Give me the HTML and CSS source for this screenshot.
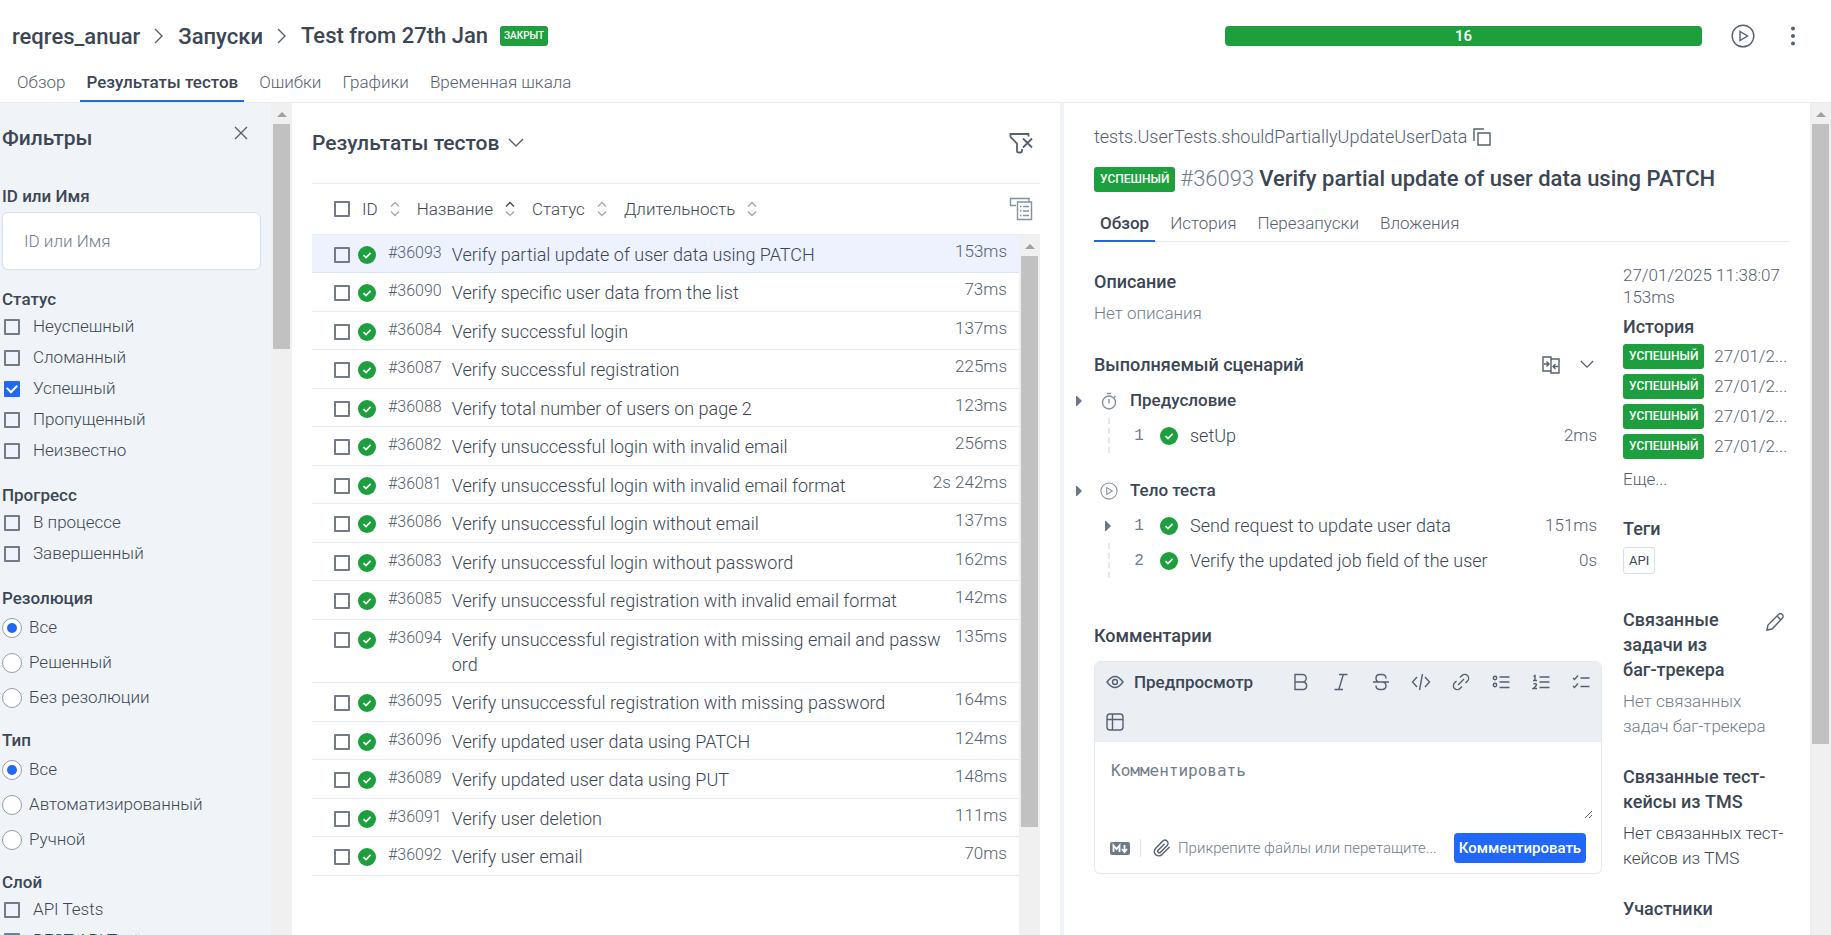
FILE: index.html
```html
<!DOCTYPE html>
<html lang="ru">
<head>
<meta charset="utf-8">
<title>Test from 27th Jan</title>
<meta name="viewport" content="width=device-width, initial-scale=1">
<link rel="stylesheet" href="styles.css">
</head>
<body>
<svg class="sprite" aria-hidden="true">
  <symbol id="ok" viewBox="0 0 18 18"><circle cx="9" cy="9" r="9" fill="#1d9f3e"/><path d="M5.500 9.200 8 11.600l4.600-4.700" fill="none" stroke="#fff" stroke-width="1.700"/></symbol>
  <symbol id="chev-right" viewBox="0 0 10 16"><path d="M1 1l7 7-7 7"/></symbol>
  <symbol id="chev-down" viewBox="0 0 16 10"><path d="M1 1l7 7 7-7"/></symbol>
  <symbol id="sort" viewBox="0 0 10 16"><path class="up" d="M1 5.500l4-4 4 4"/><path class="down" d="M1 10.500l4 4 4-4"/></symbol>
  <symbol id="play" viewBox="0 0 24 24"><circle cx="12" cy="12" r="10.800"/><path d="M9 7.500v9l7.500-4.500z"/></symbol>
  <symbol id="caret" viewBox="0 0 16 16"><path d="M4 3v10h1l5-5-5-5z" fill="#6c7787" stroke="none"/></symbol>
</svg>

<header class="top">
  <div class="top-row">
    <nav class="crumbs" aria-label="Путь">
      <a href="#">reqres_anuar</a>
      <svg class="ic" width="10" height="16"><use href="#chev-right"/></svg>
      <a href="#">Запуски</a>
      <svg class="ic" width="10" height="16"><use href="#chev-right"/></svg>
      <h1>Test from 27th Jan</h1>
      <span class="badge badge-small">ЗАКРЫТ</span>
    </nav>
    <div class="top-actions">
      <div class="progress">16</div>
      <button class="icon-btn" aria-label="Запустить"><svg class="ic" width="24" height="24"><use href="#play"/></svg></button>
      <button class="icon-btn" aria-label="Меню"><svg width="24" height="24" viewBox="0 0 24 24" fill="#566070"><circle cx="12" cy="4.500" r="2"/><circle cx="12" cy="12" r="2"/><circle cx="12" cy="19.500" r="2"/></svg></button>
    </div>
  </div>
  <nav class="tabs top-tabs" aria-label="Разделы">
    <a href="#">Обзор</a>
    <a href="#" class="active" aria-current="page">Результаты тестов</a>
    <a href="#">Ошибки</a>
    <a href="#">Графики</a>
    <a href="#">Временная шкала</a>
  </nav>
</header>

<div class="columns">
  <aside class="filters">
    <form class="filters-body">
      <div class="filters-head">
        <h2>Фильтры</h2>
        <button type="button" class="icon-btn" aria-label="Закрыть"><svg class="ic" width="14" height="14" viewBox="0 0 14 14"><path d="M1 1l12 12M13 1L1 13"/></svg></button>
      </div>
      <div class="field">
        <label for="q">ID или Имя</label>
        <input id="q" type="text" placeholder="ID или Имя">
      </div>
      <fieldset>
        <legend>Статус</legend>
        <label class="opt"><input type="checkbox">Неуспешный</label>
        <label class="opt"><input type="checkbox">Сломанный</label>
        <label class="opt"><input type="checkbox" checked>Успешный</label>
        <label class="opt"><input type="checkbox">Пропущенный</label>
        <label class="opt"><input type="checkbox">Неизвестно</label>
      </fieldset>
      <fieldset>
        <legend>Прогресс</legend>
        <label class="opt"><input type="checkbox">В процессе</label>
        <label class="opt"><input type="checkbox">Завершенный</label>
      </fieldset>
      <fieldset class="radios">
        <legend>Резолюция</legend>
        <label class="opt"><input type="radio" name="res" checked>Все</label>
        <label class="opt"><input type="radio" name="res">Решенный</label>
        <label class="opt"><input type="radio" name="res">Без резолюции</label>
      </fieldset>
      <fieldset class="radios">
        <legend>Тип</legend>
        <label class="opt"><input type="radio" name="type" checked>Все</label>
        <label class="opt"><input type="radio" name="type">Автоматизированный</label>
        <label class="opt"><input type="radio" name="type">Ручной</label>
      </fieldset>
      <fieldset>
        <legend>Слой</legend>
        <label class="opt"><input type="checkbox">API Tests</label>
        <label class="opt"><input type="checkbox">REST API Tests</label>
      </fieldset>
    </form>
    <div class="scroll" aria-hidden="true"><span class="thumb" style="height:27%"></span></div>
  </aside>

  <main class="results">
    <div class="results-head">
      <h2>Результаты тестов</h2>
      <button class="icon-btn" aria-label="Выбрать вид"><svg class="ic" width="16" height="10"><use href="#chev-down"/></svg></button>
      <button class="icon-btn push" aria-label="Сбросить фильтр"><svg class="ic thick" width="24" height="22" viewBox="0 0 24 22"><path d="M19.500 4.500V2H1.500v3l6.500 6.500V19q0 1.500 1.500 1.500h2q1.500 0 1.500-2V17M14 6.500l9 9M23 6.500l-9 9"/></svg></button>
    </div>
    <div class="sorters">
      <input type="checkbox" aria-label="Выбрать все">
      <button>ID<svg class="ic sort" width="10" height="16"><use href="#sort"/></svg></button>
      <button>Название<svg class="ic sort asc" width="10" height="16"><use href="#sort"/></svg></button>
      <button>Статус<svg class="ic sort" width="10" height="16"><use href="#sort"/></svg></button>
      <button>Длительность<svg class="ic sort" width="10" height="16"><use href="#sort"/></svg></button>
      <button class="icon-btn push" aria-label="Колонки"><svg class="ic pale" width="24" height="24" viewBox="0 0 24 24"><path d="M7 8.500H1.500v-7H20V4.500M8.500 5H22.500V22.500H8.500zM11 9.500h1.500M14 9.500h6M11 14h1.500M14 14h6M11 18.500h1.500M14 18.500h6"/></svg></button>
    </div>
    <div class="list-wrap">
      <ul class="list">
        <li class="row selected"><span class="pick"><input type="checkbox" aria-label="#36093"><svg width="18" height="18"><use href="#ok"/></svg></span><span class="num">#36093</span><a href="#" class="name">Verify partial update of user data using PATCH</a><span class="dur">153ms</span></li>
        <li class="row"><span class="pick"><input type="checkbox" aria-label="#36090"><svg width="18" height="18"><use href="#ok"/></svg></span><span class="num">#36090</span><a href="#" class="name">Verify specific user data from the list</a><span class="dur">73ms</span></li>
        <li class="row"><span class="pick"><input type="checkbox" aria-label="#36084"><svg width="18" height="18"><use href="#ok"/></svg></span><span class="num">#36084</span><a href="#" class="name">Verify successful login</a><span class="dur">137ms</span></li>
        <li class="row"><span class="pick"><input type="checkbox" aria-label="#36087"><svg width="18" height="18"><use href="#ok"/></svg></span><span class="num">#36087</span><a href="#" class="name">Verify successful registration</a><span class="dur">225ms</span></li>
        <li class="row"><span class="pick"><input type="checkbox" aria-label="#36088"><svg width="18" height="18"><use href="#ok"/></svg></span><span class="num">#36088</span><a href="#" class="name">Verify total number of users on page 2</a><span class="dur">123ms</span></li>
        <li class="row"><span class="pick"><input type="checkbox" aria-label="#36082"><svg width="18" height="18"><use href="#ok"/></svg></span><span class="num">#36082</span><a href="#" class="name">Verify unsuccessful login with invalid email</a><span class="dur">256ms</span></li>
        <li class="row"><span class="pick"><input type="checkbox" aria-label="#36081"><svg width="18" height="18"><use href="#ok"/></svg></span><span class="num">#36081</span><a href="#" class="name">Verify unsuccessful login with invalid email format</a><span class="dur">2s 242ms</span></li>
        <li class="row"><span class="pick"><input type="checkbox" aria-label="#36086"><svg width="18" height="18"><use href="#ok"/></svg></span><span class="num">#36086</span><a href="#" class="name">Verify unsuccessful login without email</a><span class="dur">137ms</span></li>
        <li class="row"><span class="pick"><input type="checkbox" aria-label="#36083"><svg width="18" height="18"><use href="#ok"/></svg></span><span class="num">#36083</span><a href="#" class="name">Verify unsuccessful login without password</a><span class="dur">162ms</span></li>
        <li class="row"><span class="pick"><input type="checkbox" aria-label="#36085"><svg width="18" height="18"><use href="#ok"/></svg></span><span class="num">#36085</span><a href="#" class="name">Verify unsuccessful registration with invalid email format</a><span class="dur">142ms</span></li>
        <li class="row"><span class="pick"><input type="checkbox" aria-label="#36094"><svg width="18" height="18"><use href="#ok"/></svg></span><span class="num">#36094</span><a href="#" class="name">Verify unsuccessful registration with missing email and password</a><span class="dur">135ms</span></li>
        <li class="row"><span class="pick"><input type="checkbox" aria-label="#36095"><svg width="18" height="18"><use href="#ok"/></svg></span><span class="num">#36095</span><a href="#" class="name">Verify unsuccessful registration with missing password</a><span class="dur">164ms</span></li>
        <li class="row"><span class="pick"><input type="checkbox" aria-label="#36096"><svg width="18" height="18"><use href="#ok"/></svg></span><span class="num">#36096</span><a href="#" class="name">Verify updated user data using PATCH</a><span class="dur">124ms</span></li>
        <li class="row"><span class="pick"><input type="checkbox" aria-label="#36089"><svg width="18" height="18"><use href="#ok"/></svg></span><span class="num">#36089</span><a href="#" class="name">Verify updated user data using PUT</a><span class="dur">148ms</span></li>
        <li class="row"><span class="pick"><input type="checkbox" aria-label="#36091"><svg width="18" height="18"><use href="#ok"/></svg></span><span class="num">#36091</span><a href="#" class="name">Verify user deletion</a><span class="dur">111ms</span></li>
        <li class="row"><span class="pick"><input type="checkbox" aria-label="#36092"><svg width="18" height="18"><use href="#ok"/></svg></span><span class="num">#36092</span><a href="#" class="name">Verify user email</a><span class="dur">70ms</span></li>
      </ul>
      <div class="scroll" aria-hidden="true"><span class="thumb" style="height:81.5%"></span></div>
    </div>
  </main>

  <section class="detail">
    <div class="detail-body">
      <div class="path"><span>tests.UserTests.shouldPartiallyUpdateUserData</span>
        <button class="icon-btn" aria-label="Копировать"><svg class="ic" width="18" height="18" viewBox="0 0 18 18"><path d="M1 13V1h10M5 5h12v12H5z"/></svg></button>
      </div>
      <h2 class="detail-title"><span class="badge">УСПЕШНЫЙ</span><span class="case-id">#36093</span><span>Verify partial update of user data using PATCH</span></h2>
      <nav class="tabs" aria-label="Тест">
        <a href="#" class="active" aria-current="page">Обзор</a>
        <a href="#">История</a>
        <a href="#">Перезапуски</a>
        <a href="#">Вложения</a>
      </nav>
      <div class="detail-grid">
        <div class="detail-main">
          <h3>Описание</h3>
          <p class="muted">Нет описания</p>
          <div class="scenario-head">
            <h3>Выполняемый сценарий</h3>
            <button class="icon-btn" aria-label="Сравнить"><svg class="ic" width="18" height="18" viewBox="0 0 18 18"><path d="M9 3V1H1v14h8V3h8v14H9v-2M2 8h4.500M4.500 5.500L7 8l-2.500 2.500M16 10.500h-4.500M13.500 8L11 10.500l2.500 2.500"/></svg></button>
            <button class="icon-btn" aria-label="Свернуть"><svg class="ic" width="14" height="9"><use href="#chev-down"/></svg></button>
          </div>
          <div class="group">
            <div class="group-head">
              <svg width="16" height="16"><use href="#caret"/></svg>
              <svg class="ic pale" width="18" height="18" viewBox="0 0 18 18"><circle cx="9" cy="10.500" r="6.500"/><path d="M7 1.500h4M9 7v4.500M14 5.500l1.500-1.500"/></svg>
              <h4>Предусловие</h4>
            </div>
            <div class="step"><span class="rail"></span><span class="idx">1</span><svg width="18" height="18"><use href="#ok"/></svg><span class="step-name">setUp</span><span class="step-dur">2ms</span></div>
          </div>
          <div class="group">
            <div class="group-head">
              <svg width="16" height="16"><use href="#caret"/></svg>
              <svg class="ic pale" width="18" height="18"><use href="#play"/></svg>
              <h4>Тело теста</h4>
            </div>
            <div class="step"><svg width="16" height="16"><use href="#caret"/></svg><span class="idx">1</span><svg width="18" height="18"><use href="#ok"/></svg><span class="step-name">Send request to update user data</span><span class="step-dur">151ms</span></div>
            <div class="step"><span class="rail"></span><span class="idx">2</span><svg width="18" height="18"><use href="#ok"/></svg><span class="step-name">Verify the updated job field of the user</span><span class="step-dur">0s</span></div>
          </div>
          <h3 class="comments-title">Комментарии</h3>
          <form class="editor">
            <div class="toolbar">
              <button type="button" class="preview"><svg class="ic" width="18" height="18" viewBox="0 0 18 18"><path d="M1 9q8-11 16 0-8 11-16 0z"/><circle cx="9" cy="9" r="2.500"/></svg>Предпросмотр</button>
              <button type="button" aria-label="Жирный"><svg class="ic" width="18" height="18" viewBox="0 0 18 18"><path d="M3 1.500h7.500a3.700 3.700 0 0 1 0 7.500H3zM3 9h8.500a3.800 3.800 0 0 1 0 7.500H3z"/></svg></button>
              <button type="button" aria-label="Курсив"><svg class="ic" width="18" height="18" viewBox="0 0 18 18"><path d="M7 1.500h8.500M2.500 16.500H11M11.300 1.500l-4.500 15"/></svg></button>
              <button type="button" aria-label="Зачеркнутый"><svg class="ic" width="18" height="18" viewBox="0 0 18 18"><path d="M14 5.500C14 3 12.500 1.500 10 1.500H8C5.500 1.500 4 3 4 5.200S5.500 9 8 9h2c2.500 0 4 1.500 4 3.800s-1.500 3.700-4 3.700H8c-2.500 0-4-1.500-4-4M1 9h16"/></svg></button>
              <button type="button" aria-label="Код"><svg class="ic" width="20" height="18" viewBox="0 0 20 18"><path d="M6 4L1.500 9 6 14M14 4l4.500 5-4.500 5M11.500 1l-3 16"/></svg></button>
              <button type="button" aria-label="Ссылка"><svg class="ic" width="18" height="18" viewBox="0 0 18 18"><path d="M6 12l6-6M8 4.500l2-2a3.800 3.800 0 0 1 5.500 5.500l-2 2M10 13.500l-2 2A3.800 3.800 0 0 1 2.500 10l2-2"/></svg></button>
              <button type="button" aria-label="Список"><svg class="ic" width="18" height="18" viewBox="0 0 18 18"><circle cx="3" cy="5" r="1.700"/><circle cx="3" cy="12" r="1.700"/><path d="M7.500 4h10M7.500 9h10M7.500 14.500h10"/></svg></button>
              <button type="button" aria-label="Нумерованный список"><svg class="ic" width="18" height="18" viewBox="0 0 18 18"><path d="M1.500 3.500L3 2.500v5M1 7.500h4M1.500 11q2.500-1 3 .5 0 1.500-3.300 4H5M7.500 4h10M7.500 9h10M7.500 14.500h10"/></svg></button>
              <button type="button" aria-label="Список задач"><svg class="ic" width="18" height="18" viewBox="0 0 18 18"><path d="M1 5l1.500 1.500L6 2.500M1 13l1.500 1.500L6 10.500M8.500 5h9M8.500 13.500h9"/></svg></button>
              <button type="button" aria-label="Таблица"><svg class="ic" width="18" height="18" viewBox="0 0 18 18"><rect x="1" y="1" width="16" height="16" rx="3"/><path d="M1 6.500h16M6.500 1v16"/></svg></button>
            </div>
            <textarea placeholder="Комментировать" aria-label="Комментировать"></textarea>
            <div class="editor-foot">
              <svg class="md" width="20" height="13" viewBox="0 0 20 13"><rect width="20" height="13" rx="2" fill="#6f7a89"/><path d="M3.500 10V3.500l3 3.500 3-3.500V10M14.500 3v6.500M12 7l2.500 3L17 7" fill="none" stroke="#fff" stroke-width="1.800"/></svg>
              <label class="attach"><svg class="ic" width="18" height="18" viewBox="0 0 18 18"><path d="M16.500 8l-7.500 7.500a4.300 4.300 0 0 1-6.500-6L9.500 2.300a3 3 0 0 1 4.700 4.200l-6.700 6.700a1.500 1.500 0 0 1-2.400-2L11.500 5"/></svg><span>Прикрепите файлы или перетащите...</span><input type="file" class="hidden-file"></label>
              <button type="button" class="primary">Комментировать</button>
            </div>
          </form>
        </div>
        <aside class="meta">
          <p class="time">27/01/2025 11:38:07<br>153ms</p>
          <h3>История</h3>
          <ul class="history">
            <li><span class="badge">УСПЕШНЫЙ</span><a href="#">27/01/2...</a></li>
            <li><span class="badge">УСПЕШНЫЙ</span><a href="#">27/01/2...</a></li>
            <li><span class="badge">УСПЕШНЫЙ</span><a href="#">27/01/2...</a></li>
            <li><span class="badge">УСПЕШНЫЙ</span><a href="#">27/01/2...</a></li>
          </ul>
          <a href="#" class="more">Еще...</a>
          <h3>Теги</h3>
          <span class="tag">API</span>
          <div class="meta-head">
            <h3>Связанные задачи из баг-трекера</h3>
            <button class="icon-btn" aria-label="Изменить"><svg class="ic" width="18" height="18" viewBox="0 0 18 18"><path d="M1 17l1-5L12.500 1.500a2.400 2.400 0 0 1 3.800 3.800L6 16zM11 3l4 4"/></svg></button>
          </div>
          <p class="muted">Нет связанных задач баг-трекера</p>
          <h3 class="tms">Связанные тест-кейсы из TMS</h3>
          <p>Нет связанных тест-кейсов из TMS</p>
          <h3 class="people">Участники</h3>
        </aside>
      </div>
    </div>
    <div class="scroll" aria-hidden="true"><span class="thumb" style="height:74.5%"></span></div>
  </section>
</div>
</body>
</html>
```
FILE: styles.css
```css
* { box-sizing: border-box; }

body {
  margin: 0;
  height: 100vh;
  display: flex;
  flex-direction: column;
  overflow: hidden;
  background: #fff;
  color: #3c4654;
  font: 300 17px/25px Roboto, "Noto Sans", sans-serif;
}

h1, h2, h3, h4, p, ul { margin: 0; padding: 0; font-weight: 500; }
p { font-weight: 300; }
h1, .detail-title { font-size: 22px; line-height: 28px; }
h2 { font-size: 21px; line-height: 28px; }
h3 { font-size: 18px; line-height: 25px; }
h4 { font-size: 17px; }
ul { list-style: none; font-weight: 300; }
a { color: inherit; text-decoration: none; }

button {
  padding: 0;
  border: 0;
  background: none;
  color: inherit;
  font: inherit;
  cursor: pointer;
}

.sprite { position: absolute; width: 0; height: 0; }
.ic { display: block; fill: none; stroke: #566070; stroke-width: 1.4; flex: none; }
.ic.thick { stroke-width: 1.8; }
.ic.pale { stroke: #8590a0; }
.icon-btn { display: flex; align-items: center; justify-content: center; }
.push { margin-left: auto; }
.muted { color: #717c8b; }

input[type="checkbox"], input[type="radio"] {
  appearance: none;
  flex: none;
  margin: 0;
  display: grid;
  place-items: center;
}
input[type="checkbox"] { width: 16px; height: 16px; border: 2px solid #737b88; border-radius: 1px; }
input[type="checkbox"]:checked { background: #1f68fa; border-color: #1f68fa; }
input[type="checkbox"]:checked::before {
  content: "";
  width: 8px;
  height: 5px;
  margin-bottom: 3px;
  border: solid #fff;
  border-width: 0 0 2px 2px;
  transform: rotate(-45deg);
}
input[type="radio"] { width: 20px; height: 20px; border: 1px solid #949dab; border-radius: 50%; background: #fff; }
input[type="radio"]:checked::before { content: ""; width: 10px; height: 10px; border-radius: 50%; background: #1f68fa; }

.badge {
  flex: none;
  padding: 0 6px;
  border-radius: 3px;
  background: #1d9f3e;
  color: #fff;
  font-size: 12px;
  font-weight: 500;
  line-height: 25px;
}
.badge-small { padding: 0 4px; font-size: 10px; line-height: 20px; }

/* Header */
.top { flex: none; border-bottom: 1px solid #e6ecf2; }
.top-row { display: flex; align-items: center; height: 72px; padding: 0 26px 0 12px; }
.crumbs { display: flex; align-items: center; gap: 14px; font-size: 22px; font-weight: 500; }
.crumbs .badge { margin-left: -2px; }
.top-actions { display: flex; align-items: center; gap: 26px; margin-left: auto; }
.progress {
  width: 477px;
  margin-right: 3px;
  border-radius: 4px;
  background: #1d9f3e;
  color: #fff;
  font-size: 15px;
  font-weight: 500;
  line-height: 20px;
  text-align: center;
}
.tabs { display: flex; gap: 9px; }
.tabs a { padding: 0 6px 4px; border-bottom: 2px solid transparent; color: #566070; }
.tabs .active { border-color: #1f68e0; color: #3c4654; font-weight: 500; }
.top-tabs { height: 30px; padding-left: 11px; }
.top-tabs a { height: 30px; line-height: 20px; }

/* Column frame */
.columns { flex: 1; display: grid; grid-template: minmax(0, 1fr) / 292px 768fr 771fr; min-height: 0; }
.scroll { flex: none; display: flex; flex-direction: column; align-items: center; width: 21px; background: #f0f0f0; }
.scroll::before {
  content: "";
  flex: none;
  margin: 9px 0 7px;
  border: solid transparent;
  border-width: 0 5px 5px;
  border-bottom-color: #a0a0a0;
}
.thumb { flex: none; width: 17px; background: #c1c1c1; }

/* Filters */
.filters { display: flex; background: #f0f4f8; }
.filters-body { flex: 1; min-width: 0; padding: 17px 10px 0 2px; overflow: hidden; }
.filters-head { display: flex; justify-content: space-between; padding: 4px 13px 0 0; margin-bottom: 33px; }
.filters-head .icon-btn { height: 18px; }
.field { display: flex; flex-direction: column; gap: 4px; margin-bottom: 18px; }
.field label, legend { padding: 0; font-weight: 500; line-height: 23px; }
.field input {
  width: 100%;
  height: 58px;
  padding: 0 21px;
  border: 1px solid #d9dfe7;
  border-radius: 6px;
  background: #fff;
  font: inherit;
}
::placeholder { color: #717c8b; opacity: 1; }
fieldset { margin: 0 0 18px; padding: 0; border: 0; }
.opt { display: flex; align-items: center; gap: 13px; height: 31px; padding-left: 2px; }
.radios { margin-bottom: 14px; }
.radios .opt { height: 35px; gap: 7px; padding-left: 0; }

/* Results */
.results { min-width: 0; display: flex; flex-direction: column; padding: 0 20px; }
.results-head { display: flex; align-items: center; gap: 9px; height: 81px; padding-right: 7px; border-bottom: 1px solid #e6ecf0; }
.sorters { display: flex; align-items: center; height: 51px; padding: 0 7px 0 22px; border-bottom: 1px solid #e6ecf0; }
.sorters button { display: flex; align-items: center; gap: 12px; margin-left: 17px; }
.sorters input + button { margin-left: 12px; }
.sorters .push { margin-left: auto; }
.sort { stroke: #a3aab4; }
.asc { --up: #3c4654; }
.up { stroke: var(--up, #a3aab4); }
.list-wrap { flex: 1; display: flex; min-height: 0; }
.list { flex: 1; min-width: 0; }
.row { display: flex; align-items: flex-start; padding: 7px 12px 5px 22px; border-bottom: 1px solid #e6ecf0; }
.row:nth-child(even) { padding-bottom: 6px; }
.row.selected { background: #edf2fe; border-color: #dbe4f3; }
.pick { display: flex; align-items: center; gap: 8px; height: 25px; }
.num { margin: 0 10px 0 12px; color: #566070; font-size: 16px; line-height: 22px; }
.name { flex: 1; min-width: 0; font-size: 18px; word-break: break-all; }
.dur { margin-left: 12px; color: #566070; line-height: 18px; }

/* Test detail */
.detail { min-width: 0; display: flex; border-left: 4px solid #f0f4f8; }
.detail-body { flex: 1; min-width: 0; padding: 21px 20px 0 30px; overflow: hidden; }
.path { display: flex; align-items: center; gap: 6px; color: #566070; font-size: 18px; }
.detail-title { display: flex; align-items: center; gap: 5px; margin: 16px 0 18px; }
.case-id { color: #717c8b; font-weight: 300; }
.detail-body .tabs { border-bottom: 1px solid #e6ecf2; }
.detail-body .tabs a { margin-bottom: -1px; }
.detail-grid { display: grid; grid-template-columns: minmax(0, 1fr) 167px; gap: 21px; }
.detail-main { padding-top: 27px; }
.detail-main > h3 { margin-bottom: 7px; }
.scenario-head { display: flex; align-items: center; gap: 20px; margin: 26px 0 6px; padding-right: 8px; }
.scenario-head h3 { flex: 1; }
.group { margin: 0 0 20px -22px; }
.group-head { display: flex; align-items: center; gap: 12px; height: 35px; }
.step { display: flex; align-items: center; gap: 12px; height: 35px; padding: 0 5px 0 28px; }
.step > :first-child { flex: none; width: 18px; }
.rail { display: flex; justify-content: center; height: 35px; }
.rail::before { content: ""; border-left: 2px dashed #e2e8ef; }
.idx { width: 18px; color: #717c8b; font: 16px "Liberation Mono", monospace; text-align: center; }
.step-name { flex: 1; font-size: 18px; }
.step-dur { color: #566070; }
.comments-title { margin-top: 45px; }
.detail-main > .comments-title { margin-bottom: 13px; }
.editor { border: 1px solid #e3e9ef; border-radius: 6px; overflow: hidden; }
.toolbar { display: flex; flex-wrap: wrap; background: #ebeff4; }
.toolbar button { display: flex; align-items: center; justify-content: center; width: 40px; height: 40px; }
.toolbar .preview { width: auto; flex: 1; justify-content: flex-start; gap: 10px; padding-left: 11px; font-weight: 500; }
.toolbar button:last-child { margin-right: auto; }
textarea {
  display: block;
  width: calc(100% - 8px);
  height: 77px;
  padding: 16px;
  border: 0;
  background: none;
  font: 16px/25px "DejaVu Sans Mono", monospace;
  resize: vertical;
}
.editor-foot { display: flex; align-items: center; gap: 10px; padding: 14px 15px 10px; }
.md { flex: none; }
.attach { flex: 1; min-width: 0; display: flex; align-items: center; gap: 7px; padding-left: 12px; border-left: 1px solid #dfe5ec; color: #717c8b; font-size: 15px; line-height: 16px; }
.attach span { line-height: 20px; margin: -2px 0; white-space: nowrap; }
.hidden-file { display: none; }
.primary { flex: none; width: 132px; height: 30px; border-radius: 4px; background: #1f68fa; color: #fff; font-size: 15px; font-weight: 500; }

.meta { padding-top: 22px; }
.time { margin-bottom: 6px; color: #566070; line-height: 22px; }
.history { display: grid; grid-template-columns: minmax(0, 1fr); gap: 5px; margin: 5px 0 8px; }
.history li { display: flex; gap: 10px; }
.history a { color: #566070; white-space: nowrap; }
.more { display: block; margin-bottom: 24px; color: #566070; }
.tag { display: inline-block; margin: 6px 0 33px; padding: 0 5px; border: 1px solid #d9dfe7; border-radius: 3px; font-size: 13px; font-weight: 400; }
.meta-head { display: flex; align-items: flex-start; gap: 26px; margin-bottom: 7px; padding-right: 6px; }
.meta-head h3 { flex: 1; }
.meta-head .icon-btn { height: 30px; }
.tms, .people { margin-top: 25px; }
.tms { margin-bottom: 7px; }
```
